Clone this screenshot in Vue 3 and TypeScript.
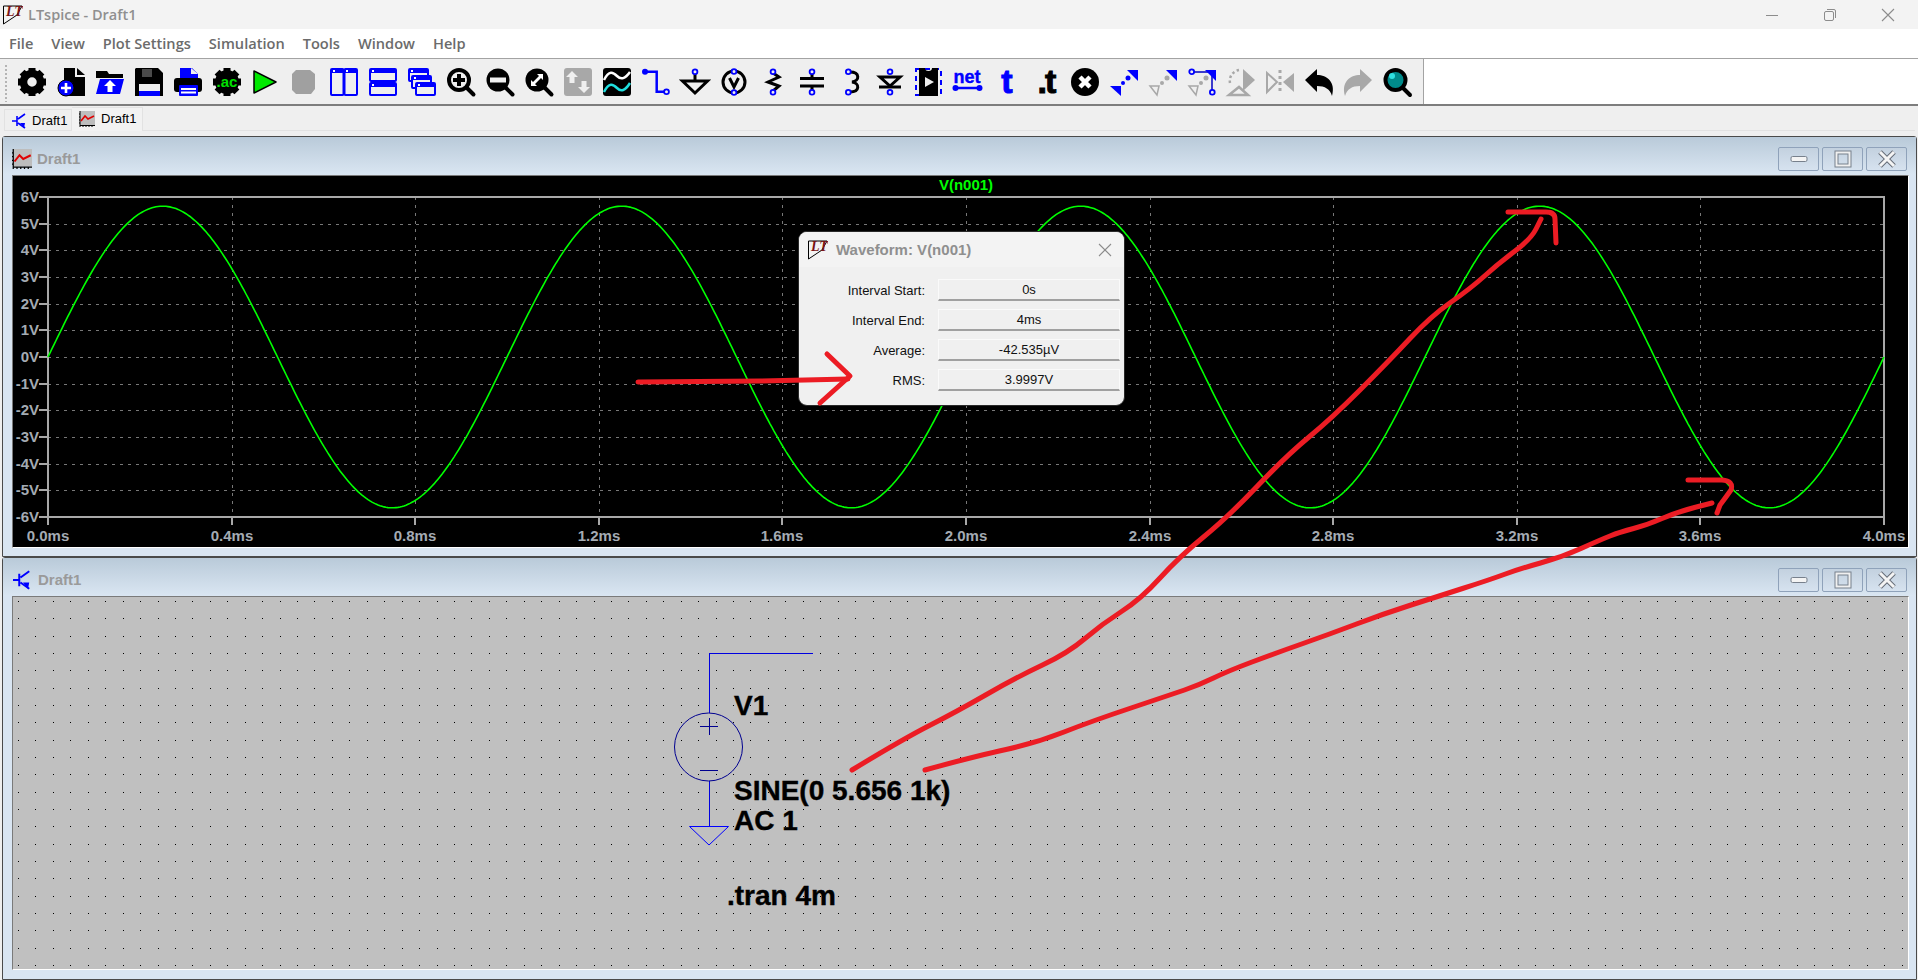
<script setup lang="ts">
const menus = ['File', 'View', 'Plot Settings', 'Simulation', 'Tools', 'Window', 'Help']

// plot geometry, in page pixels
const plotLeft = 48
const plotRight = 1884
const plotTop = 197
const plotBottom = 517
const voltStep = (plotBottom - plotTop) / 12
const timeStep = (plotRight - plotLeft) / 10
const zeroY = (plotTop + plotBottom) / 2

const yTicks = Array.from({ length: 13 }, (_, i) => ({
  label: `${6 - i}V`,
  y: Math.round(plotTop + i * voltStep),
}))
const xTicks = Array.from({ length: 11 }, (_, i) => ({
  label: `${(i * 0.4).toFixed(1)}ms`,
  x: Math.round(plotLeft + i * timeStep),
}))

const sinePoints = (() => {
  const pts: string[] = []
  for (let x = plotLeft; x <= plotRight; x += 2) {
    const t = (x - plotLeft) / 459
    const y = zeroY - 5.656 * voltStep * Math.sin(2 * Math.PI * t)
    pts.push(`${x},${y.toFixed(1)}`)
  }
  return pts.join(' ')
})()

// schematic grid dots
const gridDots = (() => {
  let d = ''
  for (let r = 0; r < 22; r++) {
    const y = Math.round(601 + r * 17.33)
    for (let c = 0; c < 109; c++) {
      d += `M${Math.round(18 + c * 17.44)} ${y}h1v1h-1z`
    }
  }
  return d
})()

const gearTeeth = [0, 45, 90, 135, 180, 225, 270, 315]
  .map((a) => `<rect x="10.5" y="0" width="7" height="6" fill="#000" transform="rotate(${a} 14 14)"/>`)
  .join('')
const pin = (x: number, y: number) =>
  `<circle cx="${x}" cy="${y}" r="2.4" fill="#efefef" stroke="#0000ff" stroke-width="1.8"/>`
const lens = `<path d="M20 20l6.5 6.5" stroke="#000" stroke-width="4" stroke-linecap="round"/>`
const winBar = (x: number, y: number, w: number, h: number) =>
  `<rect x="${x}" y="${y}" width="${w}" height="${h}" rx="1" fill="#efefef" stroke="#0000ff" stroke-width="2"/><rect x="${x}" y="${y}" width="${w}" height="4" fill="#0000ff"/><rect x="${x + 2}" y="${y + 1}" width="2" height="2" fill="#fff"/>`

const tools: string[] = [
  // control panel
  `${gearTeeth}<circle cx="14" cy="14" r="8.5" fill="none" stroke="#000" stroke-width="7.5"/>`,
  // new schematic
  `<path d="M7 0H18V9H28V28H7Z" fill="#000"/><path d="M20 0L28 7H20Z" fill="#000"/><circle cx="9" cy="20" r="8" fill="#0000ff" stroke="#000"/><path d="M9 15v10M4 20h10" stroke="#fff" stroke-width="2.6"/>`,
  // open
  `<path d="M0 3H11L13 6H27V10H0Z" fill="#000"/><path d="M4 11H28L24 26H0Z" fill="#0000ff"/><path d="M14 12L20 18H16.5V24H11.5V18H8Z" fill="#fff"/>`,
  // save
  `<path d="M1 0H23L28 5V28H0V1Z" fill="#000"/><rect x="7" y="1" width="10" height="8" fill="#4a4a4a"/><rect x="4" y="16" width="21" height="7" fill="#efefef"/><rect x="4" y="23" width="21" height="5" fill="#0000ff"/>`,
  // print
  `<path d="M6 0H18L24 6V11H6Z" fill="#0000ff"/><path d="M17 0L24 6H17Z" fill="#efefef"/><rect x="0" y="10" width="28" height="14" rx="3" fill="#000"/><rect x="5" y="17" width="19" height="11" rx="1" fill="#0000ff"/><rect x="7" y="20" width="15" height="2" fill="#fff"/><rect x="7" y="23.5" width="15" height="2" fill="#fff"/>`,
  // edit simulation command
  `${gearTeeth}<circle cx="14" cy="14" r="12" fill="#000"/><text x="14" y="19" text-anchor="middle" font-family="Liberation Sans" font-weight="700" font-size="15" fill="#00e000">.ac</text>`,
  // run
  `<path d="M2 3L24 14L2 25Z" fill="#00e800" stroke="#000" stroke-width="1.5" stroke-linejoin="round"/>`,
  // halt
  `<path d="M5 2H19L24 6V21L20 26H5L1 22V6Z" fill="#a0a0a0"/>`,
  // tile vertically
  `<rect x="1" y="1" width="12.5" height="26" rx="1" fill="#efefef" stroke="#0000ff" stroke-width="2"/><rect x="14.5" y="1" width="12.5" height="26" rx="1" fill="#efefef" stroke="#0000ff" stroke-width="2"/><rect x="1" y="1" width="26" height="4" fill="#0000ff"/><rect x="3" y="2" width="2" height="2" fill="#fff"/><rect x="16" y="2" width="2" height="2" fill="#fff"/>`,
  // tile horizontally
  `${winBar(1, 1, 26, 12)}${winBar(1, 15, 26, 12)}`,
  // cascade
  `${winBar(1, 1, 19, 12)}${winBar(4, 8, 19, 12)}${winBar(8, 15, 19, 12)}`,
  // zoom in
  `<circle cx="12" cy="12" r="10" fill="#efefef" stroke="#000" stroke-width="4"/><path d="M12 6v12M6 12h12" stroke="#000" stroke-width="4"/>${lens}`,
  // zoom out
  `<circle cx="12" cy="12" r="11.5" fill="#000"/><rect x="4" y="9.5" width="16" height="5" fill="#efefef"/>${lens}`,
  // zoom to fit
  `<circle cx="12" cy="12" r="11.5" fill="#000"/><path d="M6 18V12L8 14L14 8L12 6H18V12L16 10L10 16L12 18Z" fill="#fff"/>${lens}`,
  // pan, disabled
  `<rect x="0" y="0" width="28" height="28" rx="3" fill="#a8a8a8"/><path d="M8 3L14 9H10.5V15H5.5V9H2Z" fill="#efefef"/><path d="M20 25L26 19H22.5V13H17.5V19H14Z" fill="#efefef"/>`,
  // waveform
  `<rect x="0" y="0" width="28" height="28" rx="3" fill="#000"/><path d="M1 12C6 2 10 4 14 8S22 11 27 4" fill="none" stroke="#fff" stroke-width="2.5"/><path d="M1 24C6 14 10 16 14 20S22 23 27 15" fill="none" stroke="#20e0e0" stroke-width="2.5"/>`,
  // wire
  `<circle cx="3" cy="3.7" r="3" fill="#0000ff"/><path d="M3 3.7H14.7V23.7H22" fill="none" stroke="#0000ff" stroke-width="2.5"/>${pin(24.5, 23.7)}`,
  // ground
  `<path d="M14 6V13" stroke="#000" stroke-width="3"/><path d="M1.5 13H26.5L14 25Z" fill="none" stroke="#000" stroke-width="3"/>${pin(14, 3.7)}`,
  // voltage source
  `<circle cx="14" cy="14" r="11" fill="none" stroke="#000" stroke-width="3"/><path d="M9.5 10L14 19L18.5 10" fill="none" stroke="#000" stroke-width="3"/>${pin(14, 3.5)}${pin(14, 24.5)}`,
  // resistor
  `<path d="M14 5L20 9L9 14L20 18L14 23" fill="none" stroke="#000" stroke-width="3"/>${pin(14, 3.7)}${pin(14, 24.3)}`,
  // capacitor
  `<path d="M14 5V10M14 18V23M2 10.5H26M2 18H26" fill="none" stroke="#000" stroke-width="3"/>${pin(14, 3.7)}${pin(14, 24.3)}`,
  // inductor
  `<path d="M13 4C23 4 23 13 15 14C23 15 23 24 13 24" fill="none" stroke="#000" stroke-width="3"/>${pin(11.3, 3.7)}${pin(11.3, 24.3)}`,
  // diode
  `<path d="M4 9H24L14 18Z" fill="none" stroke="#000" stroke-width="3"/><path d="M3 19H25" stroke="#000" stroke-width="3"/>${pin(14, 3.7)}${pin(14, 24.3)}`,
  // component
  `<rect x="1" y="1" width="25" height="26" fill="none" stroke="#0000ff" stroke-width="2" stroke-dasharray="5 4"/><path d="M4 0H10A3.5 3 0 0 0 17 0H23V28H4Z" fill="#000"/><path d="M10 9L19 14L10 19Z" fill="#efefef"/>`,
  // net label
  `<text x="13" y="15" text-anchor="middle" font-family="Liberation Sans" font-weight="700" font-size="18" fill="#0000ff" stroke="#0000ff" stroke-width="0.4">net</text><path d="M1 20H26" stroke="#0000ff" stroke-width="2.5"/><circle cx="1.5" cy="20" r="3" fill="#0000ff"/><circle cx="25.5" cy="20" r="3" fill="#0000ff"/>`,
  // text
  `<text x="14" y="25" text-anchor="middle" font-family="Liberation Sans" font-weight="700" font-size="34" fill="#0000ff" stroke="#0000ff" stroke-width="1">t</text>`,
  // spice directive
  `<text x="14" y="25" text-anchor="middle" font-family="Liberation Sans" font-weight="700" font-size="34" letter-spacing="-2" fill="#000" stroke="#000" stroke-width="1">.t</text>`,
  // delete
  `<circle cx="14" cy="14" r="14" fill="#000"/><path d="M9 9L19 19M19 9L9 19" stroke="#fff" stroke-width="4.5"/>`,
  // move
  `<path d="M17 2H28V13Z" fill="#0000ff"/><path d="M0 18H11V28Z" fill="#0000ff"/><circle cx="18" cy="10" r="2.5" fill="#0000ff"/><circle cx="13" cy="15" r="2" fill="#0000ff"/>`,
  // drag
  `<path d="M17 2H28V13Z" fill="#0000ff"/><path d="M1 18H10L8 27Z" fill="none" stroke="#a8a8a8" stroke-width="1.5"/><circle cx="18" cy="10" r="2.5" fill="#a8a8a8"/><circle cx="13" cy="15" r="2" fill="#a8a8a8"/>`,
  // drag with wires
  `<path d="M4 4H24V24" fill="none" stroke="#0000c0" stroke-width="1.5"/><path d="M17 2H28V13Z" fill="#0000ff"/><path d="M1 18H10L8 27Z" fill="none" stroke="#a8a8a8" stroke-width="1.5"/><circle cx="18" cy="10" r="2.5" fill="#a8a8a8"/><circle cx="13" cy="15" r="2" fill="#a8a8a8"/>${pin(3.7, 3.7)}${pin(24.3, 24.3)}`,
  // rotate, disabled
  `<path d="M16 1L28 12L16 23Z" fill="#a8a8a8"/><path d="M12 2A11 11 0 0 0 3 15" fill="none" stroke="#a8a8a8" stroke-width="2.5" stroke-dasharray="2.5 2.5"/><path d="M2 27H21L12 19Z" fill="none" stroke="#a8a8a8" stroke-width="2.5"/>`,
  // mirror, disabled
  `<path d="M1 5L11 14L1 24Z" fill="none" stroke="#a8a8a8" stroke-width="2"/><path d="M28 5L17 14L28 24Z" fill="#a8a8a8"/><path d="M14 2V26" stroke="#a8a8a8" stroke-width="3" stroke-dasharray="3 3"/>`,
  // undo
  `<path d="M0 12L12 1V7C22 7 31 14 27 28C25 21 20 18 12 18V24Z" fill="#000"/>`,
  // redo, disabled
  `<path d="M28 12L16 1V7C6 7 -3 14 1 28C3 21 8 18 16 18V24Z" fill="#a8a8a8"/>`,
  // find
  `<circle cx="12.5" cy="12" r="10" fill="#008b8b" stroke="#000" stroke-width="4"/><circle cx="9" cy="8" r="3" fill="#30e0e0"/><path d="M20 20L27 27" stroke="#000" stroke-width="4" stroke-linecap="round"/>`,
]

// hand-drawn strokes: round off the traced points with quadratic segments
const smooth = (pts: number[][]) => {
  let d = `M${pts[0][0]} ${pts[0][1]}`
  for (let i = 1; i < pts.length - 1; i++) {
    const mx = (pts[i][0] + pts[i + 1][0]) / 2
    const my = (pts[i][1] + pts[i + 1][1]) / 2
    d += ` Q${pts[i][0]} ${pts[i][1]} ${mx} ${my}`
  }
  const last = pts[pts.length - 1]
  return `${d} L${last[0]} ${last[1]}`
}

const arrowPaths = [
  // arrow to the measurement box
  'M638 382 L760 381 L848 379',
  'M827 354 L850 376 L820 403',
  // line to the positive peak
  smooth([[852, 770], [903, 739], [956, 712], [1017, 677], [1068, 653], [1102, 624], [1141, 599], [1179, 557], [1228, 517], [1286, 456], [1332, 418], [1388, 362], [1431, 316], [1470, 289], [1499, 263], [1531, 239], [1541, 219]]),
  'M1508 212 L1546 212 Q1555 212 1555 219 L1556 243',
  // line to the negative peak
  smooth([[925, 770], [976, 756], [1036, 743], [1092, 721], [1170, 695], [1199, 685], [1228, 671], [1276, 653], [1330, 634], [1383, 614], [1436, 597], [1489, 580], [1519, 569], [1562, 557], [1600, 540], [1620, 532], [1647, 525], [1677, 512], [1712, 503]]),
  'M1688 480 L1722 480 Q1734 481 1731 490 Q1726 497 1720 505 L1717 513',
]

const dialogRows = [
  { label: 'Interval Start:', value: '0s' },
  { label: 'Interval End:', value: '4ms' },
  { label: 'Average:', value: '-42.535µV' },
  { label: 'RMS:', value: '3.9997V' },
]
</script>

<template>
  <div class="app">
    <header class="titlebar">
      <svg class="lt-logo" width="20" height="20" viewBox="0 0 20 20">
        <path d="M0.5 1H19L14 10L0.5 19Z" fill="none" stroke="#000" />
        <text x="3" y="11" class="lt-text">LT</text>
      </svg>
      <span class="app-title">LTspice - Draft1</span>
      <div class="sys-buttons">
        <svg width="14" height="14" viewBox="0 0 14 14"><path d="M1 7.5H13" stroke="#8c8c8c" /></svg>
        <svg width="14" height="14" viewBox="0 0 14 14">
          <rect x="1.5" y="3.5" width="9" height="9" rx="1.5" fill="none" stroke="#8c8c8c" />
          <path d="M4 1.5H11A1.5 1.5 0 0 1 12.5 3V10" fill="none" stroke="#8c8c8c" />
        </svg>
        <svg width="14" height="14" viewBox="0 0 14 14"><path d="M1 1L13 13M13 1L1 13" stroke="#8c8c8c" stroke-width="1.1" /></svg>
      </div>
    </header>

    <nav class="menubar">
      <span v-for="m in menus" :key="m">{{ m }}</span>
    </nav>

    <div class="toolbar">
      <div class="tool-area">
        <i class="grip"></i>
        <svg v-for="(t, i) in tools" :key="i" class="tool" width="28" height="28" viewBox="0 0 28 28" v-html="t"></svg>
      </div>
    </div>

    <div class="tabs">
      <div class="tab">
        <svg width="16" height="16" viewBox="0 0 16 16"><use href="#ico-npn" /></svg>
        <span>Draft1</span>
      </div>
      <div class="tab active">
        <svg width="16" height="16" viewBox="0 0 16 16"><use href="#ico-plot" /></svg>
        <span>Draft1</span>
      </div>
    </div>

    <div class="mdi">
      <section class="child plot-win">
        <div class="child-head">
          <svg width="20" height="20" viewBox="0 0 16 16"><use href="#ico-plot" /></svg>
          <span class="child-title">Draft1</span>
          <div class="child-btns">
            <button class="cbtn"><svg width="18" height="8" viewBox="0 0 18 8"><rect x="1" y="1.5" width="16" height="5" rx="1.5" fill="#f4f4f4" stroke="#77808c" /></svg></button>
            <button class="cbtn"><svg width="18" height="18" viewBox="0 0 18 18"><rect x="2.5" y="2.5" width="13" height="13" fill="none" stroke="#77808c" stroke-width="4" /><rect x="2.5" y="2.5" width="13" height="13" fill="none" stroke="#f0f0f0" stroke-width="2" /></svg></button>
            <button class="cbtn"><svg width="20" height="18" viewBox="0 0 20 18"><path d="M3 2L17 16M17 2L3 16" stroke="#666d78" stroke-width="5" /><path d="M3 2L17 16M17 2L3 16" stroke="#f4f4f4" stroke-width="3" /></svg></button>
          </div>
        </div>
        <div class="client black">
          <svg class="canvas" viewBox="13 176 1895 371">
            <g shape-rendering="crispEdges">
              <g v-for="t in yTicks.slice(1, -1)" :key="t.label">
                <line :x1="plotLeft" :x2="plotRight" :y1="t.y" :y2="t.y" stroke="#787878" stroke-dasharray="3 5" />
              </g>
              <g v-for="t in xTicks.slice(1, -1)" :key="t.label">
                <line :x1="t.x" :x2="t.x" :y1="plotTop" :y2="plotBottom" stroke="#787878" stroke-dasharray="3 5" />
              </g>
              <g v-for="t in yTicks" :key="'y' + t.label">
                <line :x1="39" :x2="plotLeft" :y1="t.y" :y2="t.y" stroke="#a8a8a8" stroke-width="2" />
              </g>
              <g v-for="t in xTicks" :key="'x' + t.label">
                <line :x1="t.x" :x2="t.x" :y1="plotBottom" :y2="525" stroke="#a8a8a8" stroke-width="2" />
              </g>
              <rect :x="plotLeft" :y="plotTop" :width="plotRight - plotLeft" :height="plotBottom - plotTop" fill="none" stroke="#a8a8a8" stroke-width="2" />
            </g>
            <polyline :points="sinePoints" fill="none" stroke="#00ff00" stroke-width="1.6" />
            <text x="966" y="190" text-anchor="middle" class="trace-title">V(n001)</text>
            <text v-for="t in yTicks" :key="'yl' + t.label" x="39" :y="t.y + 5" text-anchor="end" class="axis">{{ t.label }}</text>
            <text v-for="t in xTicks" :key="'xl' + t.label" :x="t.x" y="541" text-anchor="middle" class="axis">{{ t.label }}</text>
          </svg>
        </div>
      </section>

      <section class="child sch-win">
        <div class="child-head">
          <svg class="npn-head" width="20" height="20" viewBox="0 0 16 16"><use href="#ico-npn" /></svg>
          <span class="child-title">Draft1</span>
          <div class="child-btns">
            <button class="cbtn"><svg width="18" height="8" viewBox="0 0 18 8"><rect x="1" y="1.5" width="16" height="5" rx="1.5" fill="#f4f4f4" stroke="#77808c" /></svg></button>
            <button class="cbtn"><svg width="18" height="18" viewBox="0 0 18 18"><rect x="2.5" y="2.5" width="13" height="13" fill="none" stroke="#77808c" stroke-width="4" /><rect x="2.5" y="2.5" width="13" height="13" fill="none" stroke="#f0f0f0" stroke-width="2" /></svg></button>
            <button class="cbtn"><svg width="20" height="18" viewBox="0 0 20 18"><path d="M3 2L17 16M17 2L3 16" stroke="#666d78" stroke-width="5" /><path d="M3 2L17 16M17 2L3 16" stroke="#f4f4f4" stroke-width="3" /></svg></button>
          </div>
        </div>
        <div class="client grey">
          <svg class="canvas" viewBox="13 597 1895 372">
            <path :d="gridDots" fill="#000" shape-rendering="crispEdges" />
            <g shape-rendering="crispEdges" stroke="#0000e0" fill="none">
              <path d="M813 653.5H709.5V713M709.5 781V826" />
            </g>
            <path d="M689.5 826.5H728.5L709 845Z" fill="none" stroke="#0000ff" />
            <circle cx="708.5" cy="747" r="34" fill="none" stroke="#000090" />
            <path d="M700 726.5H718M709.5 718V735M700 770.5H718" stroke="#000090" shape-rendering="crispEdges" />
            <text x="734" y="715" class="sch-text">V1</text>
            <text x="734" y="800" class="sch-text">SINE(0 5.656 1k)</text>
            <text x="734" y="830" class="sch-text">AC 1</text>
            <text x="727" y="905" class="sch-text">.tran 4m</text>
          </svg>
        </div>
      </section>
    </div>

    <div class="dialog">
      <div class="dialog-head">
        <svg class="lt-logo" width="20" height="20" viewBox="0 0 20 20">
          <path d="M0.5 1H19L14 10L0.5 19Z" fill="none" stroke="#000" />
          <text x="3" y="11" class="lt-text">LT</text>
        </svg>
        <span class="dialog-title">Waveform: V(n001)</span>
        <svg class="dialog-x" width="14" height="14" viewBox="0 0 14 14"><path d="M1 1L13 13M13 1L1 13" stroke="#8c8c8c" stroke-width="1.1" /></svg>
      </div>
      <div class="dialog-body">
        <template v-for="r in dialogRows" :key="r.label">
          <label>{{ r.label }}</label>
          <output>{{ r.value }}</output>
        </template>
      </div>
    </div>

    <svg class="annotations" width="1918" height="980" viewBox="0 0 1918 980">
      <path v-for="(d, i) in arrowPaths" :key="i" :d="d" fill="none" stroke="#ec1c24" stroke-width="5" stroke-linecap="round" stroke-linejoin="round" />
    </svg>

    <svg width="0" height="0" class="defs">
      <symbol id="ico-npn" viewBox="0 0 16 16">
        <path d="M0 8H5M5 3V13M6 6L13 1M6 10L13 15" fill="none" stroke="#0000ff" stroke-width="1.6" />
        <path d="M8 10L12 15L13 10Z" fill="#0000ff" />
      </symbol>
      <symbol id="ico-plot" viewBox="0 0 16 16">
        <rect x="1" y="0" width="15" height="14" fill="#bdbdbd" />
        <path d="M1 0V16M1 3H0M1 6H0M1 9H0M1 12H0M1 14.5H16M4 14V16M7 14V16M10 14V16M13 14V16" stroke="#000" fill="none" />
        <path d="M2 10L6 5L9 8L15 5" fill="none" stroke="#e00000" stroke-width="1.6" />
      </symbol>
    </svg>
  </div>
</template>

<style scoped>
.app {
  position: relative;
  width: 1918px;
  height: 980px;
  overflow: hidden;
  display: flex;
  flex-direction: column;
  background: #efefef;
  font-family: "Liberation Sans", Arial, sans-serif;
}
.titlebar {
  height: 29px;
  flex: none;
  display: flex;
  align-items: center;
  padding-left: 3px;
  background: #f3f3f3;
}
.lt-logo {
  flex: none;
}
.lt-text {
  font-family: "Liberation Serif", serif;
  font-weight: 700;
  font-style: italic;
  font-size: 14px;
  fill: #7a1414;
}
.app-title {
  margin-left: 5px;
  font-family: "Open Sans", sans-serif;
  font-weight: 600;
  font-size: 14.5px;
  color: #8f8f8f;
}
.sys-buttons {
  margin-left: auto;
  margin-right: 23px;
  display: flex;
  gap: 44px;
}
.menubar {
  height: 30px;
  flex: none;
  box-sizing: border-box;
  border-bottom: 1px solid #a3a3a3;
  background: #fff;
  display: flex;
  align-items: center;
  gap: 18px;
  padding: 0 0 2px 9px;
  font-family: "Open Sans", sans-serif;
  font-weight: 600;
  font-size: 14.6px;
  color: #6b6b6b;
}
.toolbar {
  height: 47px;
  flex: none;
  box-sizing: border-box;
  background: #fff;
  border-bottom: 2px solid #7d7d7d;
}
.tool-area {
  position: relative;
  box-sizing: border-box;
  width: 1424px;
  height: 45px;
  padding: 1px 0 0 18px;
  display: flex;
  align-items: center;
  gap: 11px;
  background: #efefef;
  border-right: 1px solid #a3a3a3;
}
.grip {
  position: absolute;
  left: 5px;
  top: 6px;
  width: 2px;
  height: 37px;
  background: repeating-linear-gradient(to bottom, #b4b4b4 0 2px, transparent 2px 4px);
}
.tool {
  flex: none;
  overflow: visible;
}
.tabs {
  height: 30px;
  flex: none;
  box-sizing: border-box;
  display: flex;
  align-items: flex-end;
  padding: 0 3px 5px 4px;
  font-size: 13px;
  color: #000;
}
.tabs::before {
  content: "";
  position: absolute;
  left: 4px;
  right: 3px;
  top: 130px;
  height: 1px;
  background: #e2e2e2;
}
.tab {
  height: 22px;
  box-sizing: border-box;
  width: 68px;
  display: flex;
  align-items: center;
  gap: 4px;
  padding-left: 7px;
  border: 1px solid #e2e2e2;
  border-bottom: 0;
}
.tab.active {
  position: relative;
  z-index: 1;
  height: 24px;
  width: 71px;
  gap: 6px;
  padding: 0 0 2px 7px;
  background: #f2f2f2;
  border-left: 0;
}
.mdi {
  flex: 1;
  min-height: 0;
  display: flex;
  flex-direction: column;
  padding: 0 1px 0 2px;
}
.child {
  display: flex;
  flex-direction: column;
  box-sizing: border-box;
  border: 1px solid #4a4a4a;
  border-radius: 3px 3px 0 0;
  background: #d9e5f2;
  padding: 0 7px 8px 9px;
}
.plot-win {
  height: 421px;
  flex: none;
}
.sch-win {
  flex: 1;
  min-height: 0;
  padding-bottom: 9px;
}
.child-head {
  height: 38px;
  box-sizing: border-box;
  flex: none;
  margin: 0 -7px 0 -9px;
  padding: 5px 9px 0 9px;
  display: flex;
  align-items: center;
  gap: 5px;
  background: linear-gradient(to bottom, #b9cad9, #dae6f2);
}
.npn-head {
  margin-left: 1px;
}
.child-title {
  font-weight: 700;
  font-size: 15px;
  color: #9a9a9a;
}
.child-btns {
  margin-left: auto;
  display: flex;
  gap: 3px;
}
.cbtn {
  width: 41px;
  height: 24px;
  padding: 0;
  display: flex;
  align-items: center;
  justify-content: center;
  border: 1px solid #8fa2ba;
  border-radius: 2px;
  background: linear-gradient(to bottom, #c3d1df, #d6e2ef);
}
.client {
  flex: 1;
  min-height: 0;
  box-sizing: border-box;
  border-top: 1px solid #7a7a7a;
  border-left: 1px solid #7a7a7a;
  border-right: 1px solid #fff;
  border-bottom: 1px solid #fff;
}
.client.black {
  background: #000;
}
.client.grey {
  background: #c0c0c0;
}
.canvas {
  display: block;
  width: 100%;
  height: 100%;
}
.axis {
  font-weight: 700;
  font-size: 15px;
  fill: #a4abb3;
}
.trace-title {
  font-weight: 700;
  font-size: 15px;
  fill: #00ff00;
}
.sch-text {
  font-weight: 700;
  font-size: 28px;
  fill: #000;
  stroke: #000;
  stroke-width: 0.4px;
}
.dialog {
  position: absolute;
  left: 798px;
  top: 231px;
  width: 327px;
  height: 175px;
  box-sizing: border-box;
  border: 1px solid #2a2a2a;
  border-radius: 9px;
  overflow: hidden;
  background: #f0f0f0;
}
.dialog-head {
  height: 35px;
  box-sizing: border-box;
  display: flex;
  align-items: center;
  padding: 0 12px 0 9px;
  background: #f3f3f3;
}
.dialog-title {
  margin-left: 8px;
  font-weight: 700;
  font-size: 15px;
  color: #8f8f8f;
}
.dialog-x {
  margin-left: auto;
}
.dialog-body {
  display: grid;
  grid-template-columns: 126px 182px;
  grid-auto-rows: 22px;
  row-gap: 8px;
  column-gap: 13px;
  padding: 12px 0 0 0;
  font-size: 13px;
  color: #111;
}
.dialog-body label {
  text-align: right;
  line-height: 24px;
}
.dialog-body output {
  box-sizing: border-box;
  display: block;
  text-align: center;
  line-height: 20px;
  background: #f0f0f0;
  border: 1px solid #fafafa;
  border-bottom: 2px solid #a0a0a0;
}
.annotations {
  position: absolute;
  left: 0;
  top: 0;
  pointer-events: none;
}
.defs {
  position: absolute;
}
</style>
